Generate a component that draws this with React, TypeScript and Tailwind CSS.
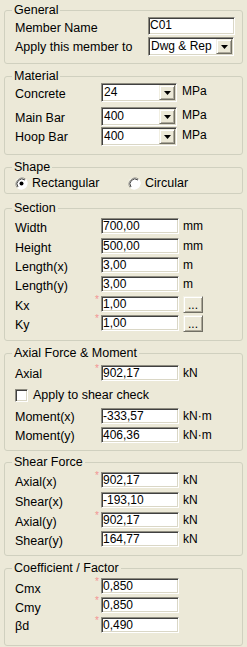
import React from "react";

const SUNKEN =
  "border border-t-[#8E8C80] border-l-[#8E8C80] border-r-white border-b-white shadow-[inset_1px_1px_0_#404040,inset_-1px_-1px_0_#DAD7C6]";
const RAISED =
  "border border-t-[#F1EFE2] border-l-[#F1EFE2] border-r-[#716F64] border-b-[#716F64] shadow-[inset_1px_1px_0_#ffffff,inset_-1px_-1px_0_#ACA899] bg-[#ECE9D8]";

function Group({ title, className, children }: { title: string; className: string; children: React.ReactNode }) {
  return (
    <div className={`mx-[4px] rounded-[3px] border border-[#D0D0BF] ${className}`}>
      <div className="-mt-[8px] ml-[7px] w-fit bg-[#ECE9D8] px-[2px] text-[12.5px] leading-[14px]">{title}</div>
      {children}
    </div>
  );
}

function Row({
  className = "",
  h = "h-[16px]",
  label,
  labelW = "w-[86px]",
  labelPad = "pt-[3px]",
  star = false,
  children,
}: {
  className?: string;
  h?: string;
  label: string;
  labelW?: string;
  labelPad?: string;
  star?: boolean;
  children: React.ReactNode;
}) {
  return (
    <div className={`flex items-start pl-[10px] ${h} ${className}`}>
      <div className={`flex shrink-0 justify-between ${labelW}`}>
        <span className={`${labelPad} whitespace-nowrap text-[12.5px] leading-[14px]`}>{label}</span>
        {star && <span className="pr-[2px] text-[10px] leading-[8px] text-[#F29494]">*</span>}
      </div>
      {children}
    </div>
  );
}

function Edit({ value, className = "w-[78px] h-[16px]" }: { value: string; className?: string }) {
  return (
    <div className={`${className} ${SUNKEN} shrink-0 overflow-hidden whitespace-nowrap bg-white pl-[1px] text-[12px] leading-[14px]`}>
      {value}
    </div>
  );
}

function Arrow() {
  return (
    <svg width="7" height="4" viewBox="0 0 7 4">
      <path d="M0 0h7L3.5 4z" fill="#000" />
    </svg>
  );
}

function Combo({ value, className }: { value: string; className: string }) {
  return (
    <div className={`${className} ${SUNKEN} flex shrink-0 bg-white p-[1px]`}>
      <div className="flex-1 whitespace-nowrap pl-[1px] text-[12px] leading-[15px]">{value}</div>
      <div className={`${RAISED} flex w-[16px] items-center justify-center`}>
        <Arrow />
      </div>
    </div>
  );
}

function Unit({ children, className = "ml-[4px]" }: { children: React.ReactNode; className?: string }) {
  return <span className={`${className} pt-[1px] whitespace-nowrap text-[12px] leading-[14px]`}>{children}</span>;
}

function Dots() {
  return (
    <div className={`${RAISED} ml-[4px] flex h-[17px] w-[20px] shrink-0 items-center justify-center text-[12px] leading-[12px]`}>
      ...
    </div>
  );
}

function Radio({ checked }: { checked?: boolean }) {
  return (
    <svg width="13" height="13" viewBox="0 0 13 13" className="shrink-0">
      <circle cx="6.5" cy="6.5" r="6" fill="#fff" />
      <path d="M2.3 10.7A6 6 0 0 1 10.7 2.3" fill="none" stroke="#8E8C80" />
      <path d="M3 10A5 5 0 0 1 10 3" fill="none" stroke="#404040" />
      <path d="M10.7 2.3A6 6 0 0 1 2.3 10.7" fill="none" stroke="#fff" />
      {checked && <circle cx="6.5" cy="6.5" r="2" fill="#000" />}
    </svg>
  );
}

export default function App() {
  return (
    <div className="h-[647px] w-[247px] overflow-hidden bg-[#ECE9D8] pt-[10px] font-['Liberation_Sans',Arial,sans-serif] text-black">
      {/* General */}
      <Group title="General" className="pb-[7px]">
        <Row label="Member Name" h="h-[18px]" labelW="w-[133px]" labelPad="pt-[4px]">
          <Edit value="C01" className="h-[18px] w-[87px]" />
        </Row>
        <Row label="Apply this member to" h="h-[19px]" labelW="w-[133px]" className="mt-[2px]">
          <Combo value="Dwg & Rep" className="h-[19px] w-[86px]" />
        </Row>
      </Group>

      {/* Material */}
      <Group title="Material" className="mt-[12px] pb-[8px]">
        <Row label="Concrete" h="h-[19px]" labelPad="pt-[4px]">
          <Combo value="24" className="h-[19px] w-[76px]" />
          <Unit className="ml-[5px]">MPa</Unit>
        </Row>
        <Row label="Main Bar" h="h-[19px]" labelPad="pt-[4px]" className="mt-[5px]">
          <Combo value="400" className="h-[19px] w-[76px]" />
          <Unit className="ml-[5px]">MPa</Unit>
        </Row>
        <Row label="Hoop Bar" h="h-[19px]" className="mt-[1px]">
          <Combo value="400" className="h-[19px] w-[76px]" />
          <Unit className="ml-[5px]">MPa</Unit>
        </Row>
      </Group>

      {/* Shape */}
      <Group title="Shape" className="mt-[12px] pb-[2px]">
        <div className="mt-[1px] flex h-[16px] items-center pl-[10px] text-[12.5px] leading-[14px]">
          <div className="flex w-[113px] items-center gap-[4px]">
            <Radio checked />
            <span>Rectangular</span>
          </div>
          <div className="flex items-center gap-[4px]">
            <Radio />
            <span>Circular</span>
          </div>
        </div>
      </Group>

      {/* Section */}
      <Group title="Section" className="mt-[14px] pb-[9px]">
        <Row label="Width" className="mt-[3px]">
          <Edit value="700,00" />
          <Unit>mm</Unit>
        </Row>
        <Row label="Height" className="mt-[4px]">
          <Edit value="500,00" />
          <Unit>mm</Unit>
        </Row>
        <Row label="Length(x)" className="mt-[3px]">
          <Edit value="3,00" />
          <Unit>m</Unit>
        </Row>
        <Row label="Length(y)" className="mt-[3px]">
          <Edit value="3,00" />
          <Unit>m</Unit>
        </Row>
        <Row label="Kx" star className="mt-[4px]">
          <Edit value="1,00" />
          <Dots />
        </Row>
        <Row label="Ky" star className="mt-[3px]">
          <Edit value="1,00" />
          <Dots />
        </Row>
      </Group>

      {/* Axial Force & Moment */}
      <Group title="Axial Force & Moment" className="mt-[12px] pb-[7px]">
        <Row label="Axial" star labelPad="pt-[2px]" className="mt-[5px]">
          <Edit value="902,17" />
          <Unit>kN</Unit>
        </Row>
        <div className="mt-[6px] flex h-[16px] items-center gap-[5px] pl-[10px] text-[12.5px] leading-[14px]">
          <div className={`${SUNKEN} h-[13px] w-[13px] bg-white`} />
          <span>Apply to shear check</span>
        </div>
        <Row label="Moment(x)" labelPad="pt-[2px]" className="mt-[5px]">
          <Edit value="-333,57" />
          <Unit>kN·m</Unit>
        </Row>
        <Row label="Moment(y)" labelPad="pt-[2px]" className="mt-[3px]">
          <Edit value="406,36" />
          <Unit>kN·m</Unit>
        </Row>
      </Group>

      {/* Shear Force */}
      <Group title="Shear Force" className="mt-[11px] pb-[8px]">
        <Row label="Axial(x)" star className="mt-[3px]">
          <Edit value="902,17" />
          <Unit>kN</Unit>
        </Row>
        <Row label="Shear(x)" className="mt-[4px]">
          <Edit value="-193,10" />
          <Unit>kN</Unit>
        </Row>
        <Row label="Axial(y)" star className="mt-[4px]">
          <Edit value="902,17" />
          <Unit>kN</Unit>
        </Row>
        <Row label="Shear(y)" className="mt-[3px]">
          <Edit value="164,77" />
          <Unit>kN</Unit>
        </Row>
      </Group>

      {/* Coefficient / Factor */}
      <Group title="Coefficient / Factor" className="mt-[12px] pb-[12px]">
        <Row label="Cmx" star labelPad="pt-[4px]" className="mt-[3px]">
          <Edit value="0,850" />
        </Row>
        <Row label="Cmy" star labelPad="pt-[4px]" className="mt-[3px]">
          <Edit value="0,850" />
        </Row>
        <Row label="βd" star labelPad="pt-[2px]" className="mt-[4px]">
          <Edit value="0,490" />
        </Row>
      </Group>
    </div>
  );
}
